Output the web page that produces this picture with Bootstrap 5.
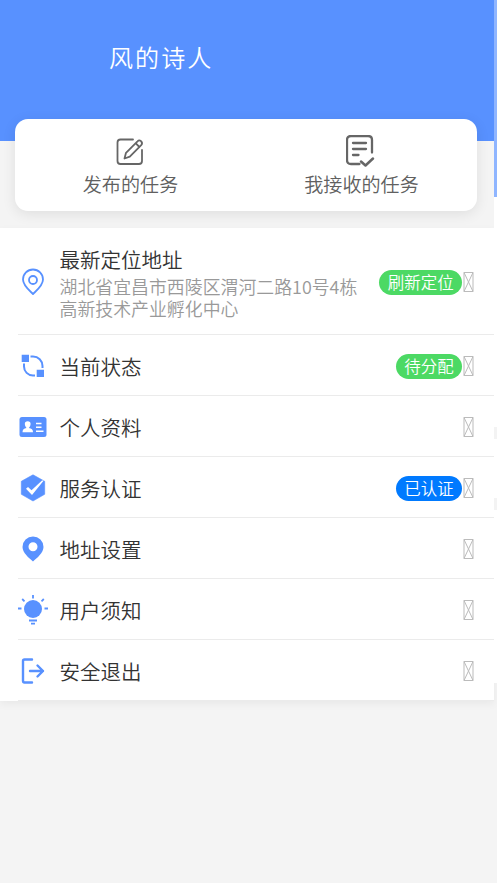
<!DOCTYPE html>
<html lang="zh-CN">
<head>
<meta charset="utf-8">
<meta name="viewport" content="width=device-width, initial-scale=1">
<title>个人中心</title>
<link rel="stylesheet" href="https://cdn.jsdelivr.net/npm/bootstrap@5.3.0/dist/css/bootstrap.min.css">
<style>
body{font-family:"Noto Sans CJK SC DemiLight","Noto Sans CJK SC",sans-serif;font-weight:300;background:#f4f4f4;color:#333;overflow:hidden}
.page{height:883px}
.screen{width:494px}
.edge{width:3px}
.edge-top{height:197px;background:#8fb5ff}
.edge-body{height:486px;background:linear-gradient(#fff 230px,#f3f3f3 230px 242px,#fff 242px 301px,#f3f3f3 301px 313px,#fff 313px)}
.hero{height:141px;background:#5891ff;padding:39px 0 0 109px}
.hero h1{font-size:24px;line-height:35px;letter-spacing:2.1px;font-weight:400}
.tasks{height:92px;margin:-22px 17px 0 15px;border-radius:13px;box-shadow:0 3px 14px rgba(0,0,0,.09);color:#606060}
.task{font-size:19.1px;line-height:30px;padding-top:16px}
.task svg{width:32px;height:34px}
.menu{margin-top:17px;box-shadow:0 3px 8px rgba(0,0,0,.05)}
.item{height:61px;margin-left:18px;padding-top:2px;border-bottom:1px solid #ebebeb}
.item-tall{height:107px}
.item-icon{width:30px;height:30px;margin-right:11.5px;color:#5891ff}
.label{font-size:20.5px;line-height:30px}
.addr{font-size:17.9px;line-height:22px;color:#999}
.addr-block{padding-bottom:1px}
.addr-block .label{padding-bottom:1px}
.tag{font-size:16.5px;line-height:25px;height:25px;padding:0 8.3px;font-weight:inherit}
.tag-green{background:#4cd964}
.tag-blue{background:#007aff}
.box-glyph{width:11px;height:20px;margin:0 20px 0 1px;color:#bbb}
</style>
</head>
<body>
<div class="page d-flex">
<main class="screen flex-shrink-0">
  <header class="hero text-white"><h1 class="m-0">风的诗人</h1></header>
  <section class="tasks bg-white position-relative d-flex">
    <div class="task col-6 d-flex flex-column align-items-center">
      <svg viewBox="1 0 32 34" fill="none" stroke="#666" stroke-width="1.800" stroke-linecap="round" stroke-linejoin="round"><path d="M19 4.500H6.500Q3.500 4.500 3.500 7.500V26Q3.500 29 6.500 29H25Q28 29 28 26V15M10.500 23.500L12 17.800 23.500 6.300Q25.200 4.500 27 6.200 29 8.200 27.200 10.200L15.800 21.600ZM21.600 8.200L25.400 12"/></svg>
      <span>发布的任务</span>
    </div>
    <div class="task col-6 d-flex flex-column align-items-center">
      <svg viewBox="2 .5 32 34" fill="none" stroke="#666" stroke-width="2.300" stroke-linecap="round" stroke-linejoin="round"><path d="M15.500 29.500H7Q3 29.500 3 25.500V5.500Q3 1.500 7 1.500H24Q28 1.500 28 5.500V18M9 8.500H22M9 14.500H22M9 20.500H14.500"/><path d="M17 27L21.500 31 29 24" stroke-width="2.500"/></svg>
      <span>我接收的任务</span>
    </div>
  </section>
  <section class="menu bg-white">
    <div class="item item-tall d-flex align-items-center">
      <svg class="item-icon flex-shrink-0" viewBox="0 0 30 30" fill="none" stroke="currentColor" stroke-width="1.800" stroke-linejoin="round"><path d="M15 27C11.500 23.500 5 18.500 5 12.500A10 10 0 0 1 25 12.500C25 18.500 18.500 23.500 15 27Z"/><circle cx="15" cy="13" r="4"/></svg>
      <div class="addr-block me-auto text-nowrap"><div class="label">最新定位地址</div><div class="addr">湖北省宜昌市西陵区渭河二路10号4栋<br>高新技术产业孵化中心</div></div>
      <span class="tag tag-green badge rounded-pill">刷新定位</span>
      <svg class="box-glyph flex-shrink-0" viewBox="0 0 11 20" fill="none" stroke="currentColor"><path d="M1 .5H10V19.500H1ZL10 19.500M10 .5L1 19.500"/></svg>
    </div>
    <div class="item d-flex align-items-center">
      <svg class="item-icon flex-shrink-0" viewBox="0 0 30 30" fill="none" stroke="currentColor" stroke-width="2"><path d="M12.500 5.500H15A9.500 9.500 0 0 1 24.500 15V17M6 12.500V15.500A9 9 0 0 0 15 24.500H17"/><path d="M3.700 3.700H11V11H3.700ZM18.700 18.700H26V26H18.700Z" fill="currentColor" stroke="none"/></svg>
      <span class="label me-auto">当前状态</span><span class="tag tag-green badge rounded-pill">待分配</span>
      <svg class="box-glyph flex-shrink-0" viewBox="0 0 11 20" fill="none" stroke="currentColor"><path d="M1 .5H10V19.500H1ZL10 19.500M10 .5L1 19.500"/></svg>
    </div>
    <div class="item d-flex align-items-center">
      <svg class="item-icon flex-shrink-0" viewBox="0 0 30 30"><rect x="1.500" y="5" width="27" height="20" rx="2.500" fill="currentColor"/><path d="M4.500 20.300Q4.500 16.500 8.500 16 6.800 14 6.800 12 6.800 9.200 9.700 9.200T12.600 12Q12.600 14 10.900 16 15 16.500 15 20.300Z" fill="#fff"/><path d="M18 11.500H23.500M18 15.300H23.500M18 19.300H25.500" stroke="#fff" stroke-width="1.500"/></svg>
      <span class="label me-auto">个人资料</span>
      <svg class="box-glyph flex-shrink-0" viewBox="0 0 11 20" fill="none" stroke="currentColor"><path d="M1 .5H10V19.500H1ZL10 19.500M10 .5L1 19.500"/></svg>
    </div>
    <div class="item d-flex align-items-center">
      <svg class="item-icon flex-shrink-0" viewBox="0 0 30 30"><path d="M15 1.800L26.700 8.300V21.300L15 28 3.300 21.300V8.300Z" fill="currentColor" stroke="currentColor" stroke-width=".6" stroke-linejoin="round"/><path d="M8 15.700L10 14 13.500 17.200 24 7.500 25.800 7.500 14 22Z" fill="#fff"/></svg>
      <span class="label me-auto">服务认证</span><span class="tag tag-blue badge rounded-pill">已认证</span>
      <svg class="box-glyph flex-shrink-0" viewBox="0 0 11 20" fill="none" stroke="currentColor"><path d="M1 .5H10V19.500H1ZL10 19.500M10 .5L1 19.500"/></svg>
    </div>
    <div class="item d-flex align-items-center">
      <svg class="item-icon flex-shrink-0" viewBox="0 0 30 30" fill="currentColor" fill-rule="evenodd"><path d="M15 27.500C11 24 4.500 18.700 4.500 13A10.500 10.500 0 0 1 25.500 13C25.500 18.700 19 24 15 27.500ZM10.500 12.800A4.500 4.500 0 1 0 19.500 12.800 4.500 4.500 0 1 0 10.500 12.800Z"/></svg>
      <span class="label me-auto">地址设置</span>
      <svg class="box-glyph flex-shrink-0" viewBox="0 0 11 20" fill="none" stroke="currentColor"><path d="M1 .5H10V19.500H1ZL10 19.500M10 .5L1 19.500"/></svg>
    </div>
    <div class="item d-flex align-items-center">
      <svg class="item-icon flex-shrink-0" viewBox="0 0 30 30"><circle cx="15" cy="14" r="9" fill="currentColor"/><path d="M15 0V3.500M4.200 4L6.500 6.300M25.800 4L23.500 6.300M0 13.500H3.500M26.500 13.500H30M11 25.500H19M13 28.700H17" fill="none" stroke="currentColor" stroke-width="1.800"/></svg>
      <span class="label me-auto">用户须知</span>
      <svg class="box-glyph flex-shrink-0" viewBox="0 0 11 20" fill="none" stroke="currentColor"><path d="M1 .5H10V19.500H1ZL10 19.500M10 .5L1 19.500"/></svg>
    </div>
    <div class="item d-flex align-items-center">
      <svg class="item-icon flex-shrink-0" viewBox="0 0 30 30" fill="none" stroke="currentColor" stroke-width="2.400" stroke-linecap="round" stroke-linejoin="round"><path d="M14 3.500H6.500Q5 3.500 5 5V24.500Q5 26.500 6.500 26.500H14M12 15H25M19.500 9.500L25 15 19.500 20.500"/></svg>
      <span class="label me-auto">安全退出</span>
      <svg class="box-glyph flex-shrink-0" viewBox="0 0 11 20" fill="none" stroke="currentColor"><path d="M1 .5H10V19.500H1ZL10 19.500M10 .5L1 19.500"/></svg>
    </div>
  </section>
</main>
<div class="edge"><div class="edge-top"></div><div class="edge-body"></div></div>
</div>
<script src="https://cdn.jsdelivr.net/npm/bootstrap@5.3.0/dist/js/bootstrap.bundle.min.js"></script>
</body>
</html>
